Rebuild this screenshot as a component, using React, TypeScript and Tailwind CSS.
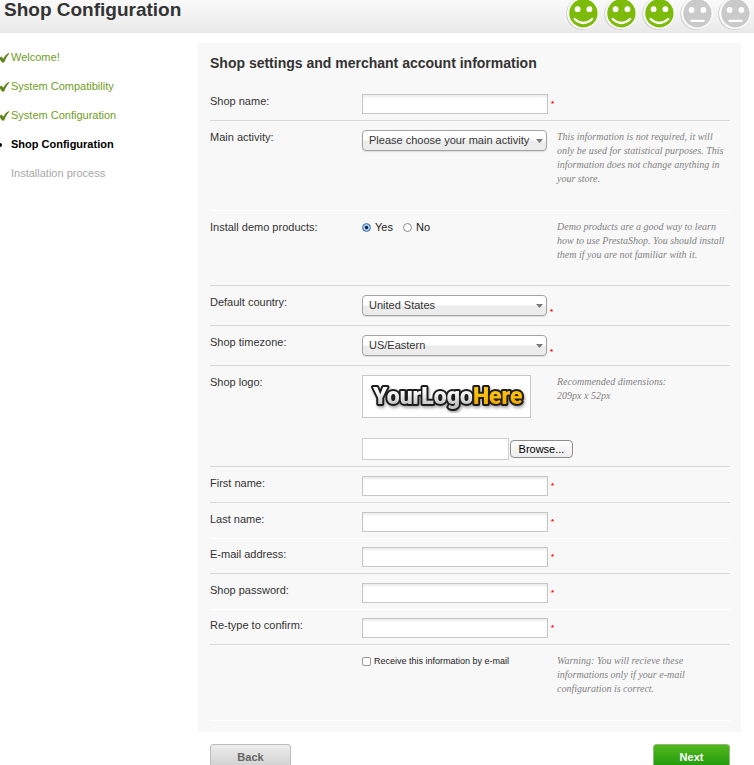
import { useState } from 'react';
import type { ReactNode } from 'react';

type StepState = 'done' | 'current' | 'todo';

const STEPS: { label: string; state: StepState }[] = [
  { label: 'Welcome!', state: 'done' },
  { label: 'System Compatibility', state: 'done' },
  { label: 'System Configuration', state: 'done' },
  { label: 'Shop Configuration', state: 'current' },
  { label: 'Installation process', state: 'todo' },
];

const STEP_STYLES: Record<StepState, string> = {
  done: 'text-[#6f9e25]',
  current: 'font-bold text-black',
  todo: 'text-[#a8a8a8]',
};

function Smiley({ happy }: { happy: boolean }) {
  return (
    <svg width="38" height="31" viewBox="0 0 38 31" aria-hidden="true">
      <circle cx="18" cy="14" r="15.8" fill="#cfcfcf" />
      <circle cx="19" cy="13.3" r="15.8" fill="#fff" />
      <circle cx="19.4" cy="13.3" r="14.2" fill={happy ? '#7dbb0a' : '#cacaca'} />
      <circle cx="13.6" cy={happy ? 9.2 : 10} r="2.9" fill="#fff" />
      <circle cx="25.4" cy={happy ? 9.2 : 10} r="2.9" fill="#fff" />
      <path
        d={happy ? 'M10.6 19Q19.4 27 28.2 19' : 'M13.4 20.8H25.6'}
        fill="none"
        stroke="#fff"
        strokeWidth="2.2"
        strokeLinecap="round"
      />
    </svg>
  );
}

function StepMark({ state }: { state: StepState }) {
  if (state === 'todo') return <span className="w-[11px]" />;
  return (
    <svg className="w-[11px] shrink-0" height="12" viewBox="0 0 11 12" aria-hidden="true">
      {state === 'done' ? (
        <path d="M0 5.4L1.6 4.6L3.2 6.8C4.6 4.2 6.4 2.2 8.8 1L9.2 1.8C7.2 4 5.6 6.8 4.2 10.4L2 10.4L0 7.4Z" fill="#5f8419" />
      ) : (
        <circle cx="0" cy="6" r="2" fill="#000" />
      )}
    </svg>
  );
}

function Required({ low }: { low?: boolean }) {
  return (
    <sup className={`ml-[3px] text-[8px] leading-[8px] font-bold text-[#f00] ${low ? 'top-0 self-end' : 'top-0'}`}>
      *
    </sup>
  );
}

type RowProps = {
  label?: string;
  htmlFor?: string;
  help?: string;
  className: string;
  children: ReactNode;
};

function Row({ label, htmlFor, help, className, children }: RowProps) {
  return (
    <div className={`grid grid-cols-[152px_195px_1fr] items-start border-b ${className}`}>
      {label ? (
        <label htmlFor={htmlFor} className="leading-[14px]">
          {label}
        </label>
      ) : (
        <span />
      )}
      <div>{children}</div>
      {help && (
        <p className="max-w-[168px] font-['Liberation_Serif',serif] text-[10px] leading-[14px] whitespace-pre-line text-[#828282] italic">
          {help}
        </p>
      )}
    </div>
  );
}

function TextField({ id, type = 'text' }: { id: string; type?: string }) {
  return (
    <div className="flex items-center">
      <input
        id={id}
        type={type}
        className="h-5 w-[186px] border border-[#c6c6c6] bg-white px-1 shadow-[inset_0_2px_2px_#ececec] outline-none"
      />
      <Required />
    </div>
  );
}

function Select({ id, options }: { id: string; options: string[] }) {
  return (
    <div className="relative w-[185px]">
      <select
        id={id}
        className="block h-[21px] w-full appearance-none rounded-[4px] border border-[#a3a3a3] bg-linear-to-b from-white from-45% to-[#ececec] to-55% pr-[14px] pl-[6px] shadow-[0_1px_1px_#dcdcdc] outline-none"
      >
        {options.map((o) => (
          <option key={o}>{o}</option>
        ))}
      </select>
      <svg className="pointer-events-none absolute top-[9px] right-1" width="7" height="4" viewBox="0 0 7 4">
        <path d="M0 0H7L3.5 4Z" fill="#7a7a7a" />
      </svg>
    </div>
  );
}

function LogoPreview() {
  return (
    <div className="w-[169px] border border-[#c8c8c8] bg-white">
      <svg className="block w-full" height="41" viewBox="0 0 167 41" role="img" aria-label="YourLogoHere">
        <defs>
          <linearGradient id="silver" x1="0" y1="0" x2="0" y2="1">
            <stop offset="0.3" stopColor="#fff" />
            <stop offset="0.8" stopColor="#c4c4c4" />
          </linearGradient>
          <linearGradient id="gold" x1="0" y1="0" x2="0" y2="1">
            <stop offset="0.3" stopColor="#ffc60a" />
            <stop offset="0.8" stopColor="#f0a800" />
          </linearGradient>
          <filter id="soft">
            <feDropShadow dx="1" dy="2" stdDeviation="1.5" floodOpacity="0.35" />
          </filter>
        </defs>
        <text
          x="10"
          y="28"
          fontSize="23"
          fontWeight="900"
          stroke="#1c1c1c"
          strokeWidth="4"
          strokeLinejoin="round"
          filter="url(#soft)"
          className="font-[Roboto,sans-serif] [paint-order:stroke]"
        >
          <tspan fill="url(#silver)">YourLogo</tspan>
          <tspan fill="url(#gold)">Here</tspan>
        </text>
      </svg>
    </div>
  );
}

export default function App() {
  const [demo, setDemo] = useState(true);

  return (
    <div className="h-screen overflow-hidden bg-white font-['Liberation_Sans',Arial,sans-serif] text-[11px] text-[#333]">
      <header className="flex h-[33px] items-start justify-between bg-linear-to-b from-[#fafafa] to-[#e9e9e9] pl-1">
        <h1 className="text-[19px] leading-5 font-bold">Shop Configuration</h1>
        <div className="flex">
          {[true, true, true, false, false].map((happy, i) => (
            <Smiley key={i} happy={happy} />
          ))}
        </div>
      </header>

      <div className="flex pt-[10px] pr-[13px]">
        <ol className="w-[198px] shrink-0">
          {STEPS.map((s) => (
            <li key={s.label} className={`flex h-[29px] items-center ${STEP_STYLES[s.state]}`}>
              <StepMark state={s.state} />
              {s.label}
            </li>
          ))}
        </ol>

        <form className="min-w-0 flex-1" onSubmit={(e) => e.preventDefault()}>
          <div className="bg-[#f8f8f8] pt-[10px] pr-[11px] pb-[11px] pl-3">
            <h2 className="pb-[21px] text-[14px] leading-5 font-bold">Shop settings and merchant account information</h2>

            <Row label="Shop name:" htmlFor="shop-name" className="border-[#d9d9d9] pb-[6px]">
              <TextField id="shop-name" />
            </Row>
            <Row
              label="Main activity:"
              htmlFor="activity"
              help="This information is not required, it will only be used for statistical purposes. This information does not change anything in your store."
              className="border-white pt-[9px] pb-6"
            >
              <Select id="activity" options={['Please choose your main activity', 'Fashion', 'Computers']} />
            </Row>
            <Row
              label="Install demo products:"
              help="Demo products are a good way to learn how to use PrestaShop. You should install them if you are not familiar with it."
              className="border-[#d9d9d9] pt-[9px] pb-[23px]"
            >
              <div className="flex items-center gap-[10px] leading-[14px] text-[#222]">
                <label className="flex items-center gap-1">
                  <input
                    type="radio"
                    name="demo"
                    checked={demo}
                    onChange={() => setDemo(true)}
                    className="size-[9px] appearance-none rounded-full border border-[#8a8a8a] bg-white checked:border-[#4a6f9f] checked:bg-[radial-gradient(circle,#102040_25%,#9cc6f0_40%)]"
                  />
                  Yes
                </label>
                <label className="flex items-center gap-1">
                  <input
                    type="radio"
                    name="demo"
                    checked={!demo}
                    onChange={() => setDemo(false)}
                    className="size-[9px] appearance-none rounded-full border border-[#8a8a8a] bg-white checked:border-[#4a6f9f] checked:bg-[radial-gradient(circle,#102040_25%,#9cc6f0_40%)]"
                  />
                  No
                </label>
              </div>
            </Row>
            <Row label="Default country:" htmlFor="country" className="border-[#d9d9d9] pt-[9px] pb-[9px]">
              <div className="flex">
                <Select id="country" options={['United States', 'France']} />
                <Required low />
              </div>
            </Row>
            <Row label="Shop timezone:" htmlFor="timezone" className="border-[#d9d9d9] pt-[9px] pb-[9px]">
              <div className="flex">
                <Select id="timezone" options={['US/Eastern', 'Europe/Paris']} />
                <Required low />
              </div>
            </Row>
            <Row
              label="Shop logo:"
              htmlFor="logo"
              help={'Recommended dimensions:\n209px x 52px'}
              className="border-[#d9d9d9] pt-[9px] pb-[6px]"
            >
              <LogoPreview />
              <div className="mt-5 flex w-[212px] items-center gap-px">
                <input
                  id="logo"
                  type="text"
                  readOnly
                  className="h-[22px] w-[147px] border border-[#cfcfcf] bg-white px-1 outline-none"
                />
                <button
                  type="button"
                  className="h-[18px] w-[63px] rounded-[4px] border border-[#8f8f8f] bg-linear-to-b from-white to-[#ececec] leading-4 text-black"
                >
                  Browse...
                </button>
              </div>
            </Row>
            <Row label="First name:" htmlFor="first-name" className="border-[#d9d9d9] pt-[9px] pb-[6px]">
              <TextField id="first-name" />
            </Row>
            <Row label="Last name:" htmlFor="last-name" className="border-white pt-[9px] pb-[6px]">
              <TextField id="last-name" />
            </Row>
            <Row label="E-mail address:" htmlFor="email" className="border-[#d9d9d9] pt-[8px] pb-[6px]">
              <TextField id="email" type="email" />
            </Row>
            <Row label="Shop password:" htmlFor="password" className="border-white pt-[9px] pb-[6px]">
              <TextField id="password" type="password" />
            </Row>
            <Row label="Re-type to confirm:" htmlFor="confirm" className="border-[#d9d9d9] pt-[8px] pb-[6px]">
              <TextField id="confirm" type="password" />
            </Row>
            <Row
              help="Warning: You will recieve these informations only if your e-mail configuration is correct."
              className="border-white pt-[9px] pb-6"
            >
              <label className="flex items-center gap-[3px] text-[9px] leading-[14px] text-[#222]">
                <input
                  type="checkbox"
                  className="size-[9px] appearance-none rounded-[2px] border border-[#999] bg-white checked:bg-[#9cc6f0]"
                />
                Receive this information by e-mail
              </label>
            </Row>
          </div>

          <div className="flex justify-between pt-3 pr-[11px] pl-3 font-bold">
            <button
              type="button"
              className="h-[27px] w-[81px] rounded-[3px] border border-[#bdbdbd] bg-linear-to-b from-[#ededed] to-[#cdcdcd] text-[#666]"
            >
              Back
            </button>
            <button
              type="submit"
              className="h-[27px] w-[77px] rounded-[3px] border border-[#8dbb7c] bg-linear-to-b from-[#52b81c] to-[#0a970a] text-white"
            >
              Next
            </button>
          </div>
        </form>
      </div>
    </div>
  );
}
